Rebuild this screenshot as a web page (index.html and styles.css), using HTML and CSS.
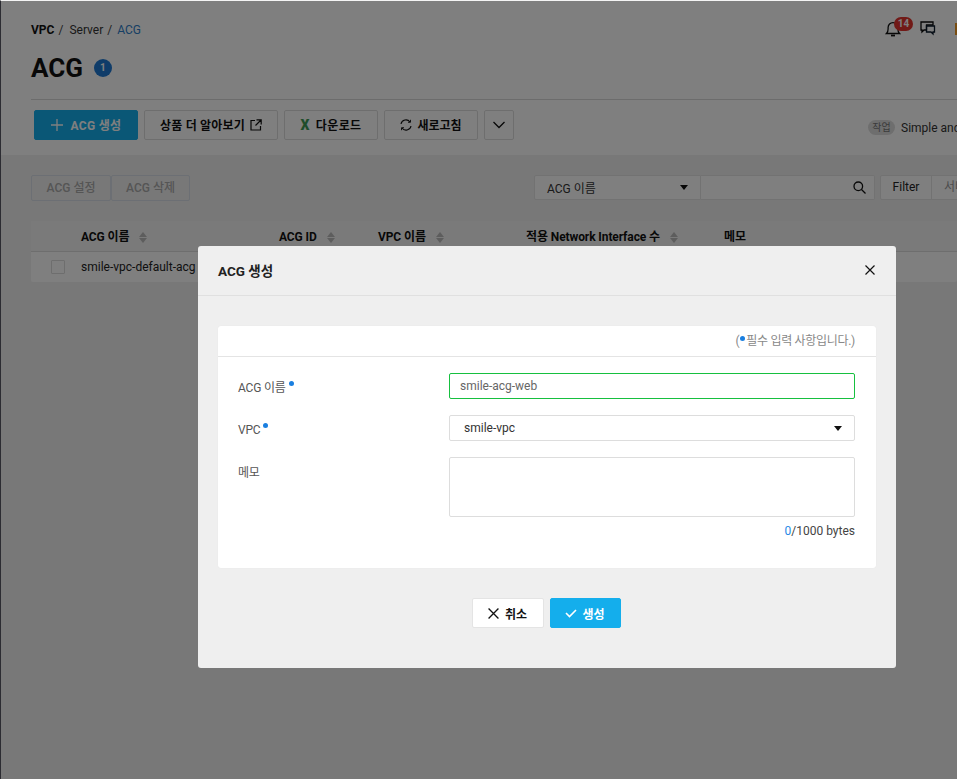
FILE: index.html
```html
<!DOCTYPE html>
<html lang="ko">
<head>
<meta charset="utf-8">
<title>ACG</title>
<link rel="stylesheet" href="styles.css">
</head>
<body>
<div class="page">
  <header class="top">
    <div class="crumb-row">
      <nav class="crumbs"><b>VPC</b><span class="sep">/</span><span>Server</span><span class="sep">/</span><span class="cur">ACG</span></nav>
      <div class="top-icons">
        <span class="bell">
          <svg width="16" height="18" viewBox="0 0 16 18" fill="none" stroke="#111" stroke-width="1.3"><path d="M1.5 13.5c1.3-1.2 1.6-2.4 1.6-4.5V7.5a4.9 4.9 0 0 1 9.8 0V9c0 2.100.3 3.300 1.600 4.500z"/><path d="M6 15.500h4" stroke-width="1.800"/></svg>
          <span class="bell-badge">14</span>
        </span>
        <svg class="chat" width="16" height="15" viewBox="0 0 16 15" fill="none" stroke="#0a0a0a" stroke-width="1.300"><path d="M1 1h12v3H6.500v5H4l-2 2V9H1z"/><path d="M6.500 5h8v6h-1.500v2l-2-2h-4.500z" stroke="#0b1a2a"/></svg>
        <span class="orange"></span>
      </div>
    </div>
    <div class="title-row"><h1>ACG</h1><span class="count">1</span></div>
    <div class="actions">
      <button class="btn primary"><svg width="12" height="12" viewBox="0 0 12 12" stroke="#fff" stroke-width="1.300"><path d="M6 0v12M0 6h12"/></svg><span>ACG 생성</span></button>
      <button class="btn learn"><span>상품 더 알아보기</span><svg width="12" height="12" viewBox="0 0 12 12" fill="none" stroke="#111" stroke-width="1.200"><path d="M5 1.500H1v9.500h9.500V7M6.500.8h4.700v4.700M11 1 5.500 6.500"/></svg></button>
      <button class="btn down dl"><b class="xl">X</b><span>다운로드</span></button>
      <button class="btn down"><svg width="12" height="12" viewBox="0 0 12 12" fill="none" stroke="#111" stroke-width="1.100"><path d="M1 5a5 5 0 0 1 9-2M11 7a5 5 0 0 1-9 2"/><path d="M10.500.8V3.300H8M1.500 11.200V8.700H4" stroke-width=".9"/></svg><span>새로고침</span></button>
      <button class="btn more"><svg width="14" height="8" viewBox="0 0 14 8" fill="none" stroke="#111" stroke-width="1.300"><path d="M1.500 1 7 6.500 12.500 1"/></svg></button>
      <div class="job"><span class="pill">작업</span><span class="job-text">Simple and Easy</span></div>
    </div>
  </header>

  <main class="content">
    <div class="tools">
      <div class="ghost-group"><button class="ghost first">ACG 설정</button><button class="ghost">ACG 삭제</button></div>
      <div class="search">
        <div class="s-select"><span>ACG 이름</span><i class="caret"></i></div>
        <div class="s-input"><svg width="13" height="13" viewBox="0 0 13 13" fill="none" stroke="#111" stroke-width="1.300"><circle cx="5.300" cy="5.300" r="4.300"/><path d="m8.500 8.500 4 4"/></svg></div>
        <div class="filter"><span class="f-on">Filter</span><span class="f-off">서버 이름</span></div>
      </div>
    </div>
    <div class="table">
      <div class="row head">
        <span class="c0"></span>
        <span class="c1">ACG 이름<i class="sort"></i></span>
        <span class="c2">ACG ID<i class="sort"></i></span>
        <span class="c3">VPC 이름<i class="sort"></i></span>
        <span class="c4">적용 Network Interface 수<i class="sort"></i></span>
        <span class="c5">메모</span>
      </div>
      <div class="row body-row">
        <span class="c0"><i class="check"></i></span>
        <span class="c1">smile-vpc-default-acg</span>
      </div>
    </div>
  </main>

  <div class="overlay"></div>

  <section class="modal">
    <div class="m-head">
      <h2>ACG 생성</h2>
      <svg width="10" height="10" viewBox="0 0 10 10" stroke="#111" stroke-width="1.200"><path d="m.5.500 9 9M9.500.500l-9 9"/></svg>
    </div>
    <div class="m-body">
      <div class="card">
        <div class="req-note">(<i class="dot"></i>필수 입력 사항입니다.)</div>
        <div class="form">
          <div class="f-row r1">
            <label>ACG 이름<i class="dot up"></i></label>
            <input class="text ok" type="text" value="smile-acg-web">
          </div>
          <div class="f-row r2">
            <label>VPC<i class="dot up"></i></label>
            <div class="text sel"><span>smile-vpc</span><i class="caret"></i></div>
          </div>
          <div class="f-row r3">
            <label>메모</label>
            <div class="memo-col">
              <div class="memo"></div>
              <div class="counter"><span class="zero">0</span>/1000 bytes</div>
            </div>
          </div>
        </div>
      </div>
      <div class="m-actions">
        <button class="m-btn cancel"><svg width="11" height="11" viewBox="0 0 10 10" stroke="#111" stroke-width="1.200"><path d="m.5.500 9 9M9.500.500l-9 9"/></svg><span>취소</span></button>
        <button class="m-btn ok-btn"><svg width="12" height="9" viewBox="0 0 12 9" fill="none" stroke="#fff" stroke-width="1.600"><path d="m1 4 3.500 3.500L11 1"/></svg><span>생성</span></button>
      </div>
    </div>
  </section>
</div>
</body>
</html>
```
FILE: styles.css
```css
* { box-sizing: border-box; }
html, body { margin: 0; height: 100%; overflow: hidden; }
body { font-family: Roboto, "Noto Sans CJK KR", sans-serif; font-size: 12px; color: #222; background: #fff; }
button { font-family: inherit; cursor: pointer; }

.page { position: relative; width: 957px; height: 779px; overflow: hidden; border-top: 1px solid #f4f4f4; border-left: 1px solid #2c2c32; background: #f1f1f1; }
.overlay { position: absolute; inset: 0; background: rgba(0, 0, 0, .5); }

.top { height: 154px; background: #fff; padding: 0 0 0 30px; }
.crumb-row { display: flex; justify-content: space-between; height: 44px; padding-top: 22px; line-height: 15px; }
.crumbs { color: #333; white-space: nowrap; }
.crumbs b { color: #111; font-weight: 700; }
.sep { margin: 0 6px 0 4px; color: #444; }
.cur { margin-left: -1px; color: #2f7fc9; }
.top-icons { display: flex; align-items: flex-start; width: 72px; flex: none; margin-top: -2px; }
.bell { position: relative; display: block; width: 16px; height: 18px; margin-top: -1px; }
.bell-badge { position: absolute; left: 9px; top: -3px; width: 19px; height: 14px; border-radius: 7px; background: #e3342f; color: #fff; font-size: 10px; font-weight: 700; line-height: 14px; text-align: center; }
.chat { margin-left: 19px; flex: none; }
.orange { width: 3px; height: 12px; margin-left: 19px; margin-top: 2px; background: #f09a25; flex: none; }

.title-row { display: flex; align-items: center; height: 46px; }
h1 { margin: 0; font-size: 26px; line-height: 46px; font-weight: 700; color: #111; }
.count { width: 18px; height: 18px; margin-left: 11px; border-radius: 50%; background: #1e78d2; color: #fff; font-size: 10px; font-weight: 700; line-height: 18px; text-align: center; }

.actions { position: relative; display: flex; gap: 6px; height: 41px; margin-top: 8px; border-top: 1px solid #d8d8d8; padding: 10px 0 0 3px; }
.btn { display: flex; align-items: center; justify-content: center; height: 30px; padding: 0; background: #fff; border: 1px solid #ddd; border-radius: 2px; font-size: 12px; font-weight: 700; color: #111; white-space: nowrap; }
.btn span { padding-bottom: 1px; }
.primary { width: 104px; gap: 8px; background: #14aeec; border-color: #14aeec; color: #fff; letter-spacing: .3px; }
.learn { width: 134px; gap: 5px; letter-spacing: .2px; }
.down { width: 94px; gap: 5px; }
.dl { gap: 6px; letter-spacing: .4px; }
.more { width: 30px; }
.xl { color: #3f9a55; font-size: 14px; }
.job { position: absolute; left: 837px; top: 20px; display: flex; align-items: center; white-space: nowrap; }
.pill { width: 27px; height: 15px; border-radius: 8px; background: #ddd; color: #777; font-size: 10px; line-height: 15px; text-align: center; }
.job-text { margin-left: 6px; color: #333; font-size: 12px; }

.content { padding: 20px 0 0 30px; }
.tools { display: flex; height: 26px; }
.ghost-group { display: flex; width: 503px; flex: none; }
.ghost { width: 80px; height: 26px; background: transparent; border: 1px solid #d8dfe8; border-radius: 2px; color: #aaa; font-size: 12px; font-weight: 500; padding: 0 0 3px; }
.ghost + .ghost { width: 79px; }
.search { display: flex; height: 25px; flex: none; }
.s-select { display: flex; align-items: center; justify-content: space-between; width: 167px; padding: 0 12px 1px 12px; background: #fff; border: 1px solid #e4e4e4; border-radius: 2px 0 0 2px; color: #333; }
.caret { display: block; width: 0; height: 0; border-left: 4px solid transparent; border-right: 4px solid transparent; border-top: 5px solid #111; }
.s-input { display: flex; align-items: center; justify-content: flex-end; width: 174px; padding-right: 8px; background: #fff; border: 1px solid #e4e4e4; border-left: 0; border-radius: 0 2px 2px 0; }
.filter { display: flex; margin-left: 5px; background: #fff; border: 1px solid #e4e4e4; border-radius: 2px; line-height: 23px; white-space: nowrap; }
.f-on { width: 51px; text-align: center; color: #222; border-right: 1px solid #e4e4e4; }
.f-off { padding-left: 12px; width: 80px; color: #999; }

.table { margin-top: 20px; background: #fff; border-radius: 2px; }
.row { display: flex; white-space: nowrap; }
.head { align-items: baseline; height: 31px; padding-top: 6px; background: #f5f5f5; border-bottom: 1px solid #ddd; font-weight: 700; color: #111; letter-spacing: -.1px; }
.body-row { align-items: center; height: 30px; color: #222; font-size: 12px; }
.c0 { width: 50px; flex: none; padding-left: 20px; }
.c1 { width: 198px; flex: none; }
.c2 { width: 99px; flex: none; }
.c3 { width: 148px; flex: none; }
.c4 { width: 198px; flex: none; }
.sort { display: inline-block; position: relative; width: 8px; height: 11px; margin-left: 10px; vertical-align: -2px; }
.sort::before, .sort::after { content: ""; position: absolute; left: 0; border-left: 4px solid transparent; border-right: 4px solid transparent; }
.sort::before { top: 0; border-bottom: 5px solid #bbb; }
.sort::after { bottom: 0; border-top: 5px solid #bbb; }
.check { display: block; width: 14px; height: 14px; border: 1px solid #ddd; background: #fff; border-radius: 1px; }

.modal { position: absolute; left: 197px; top: 245px; width: 698px; height: 422px; background: #efefef; border-radius: 3px; }
.m-head { display: flex; align-items: center; justify-content: space-between; height: 50px; padding: 0 21px 2px 20px; border-bottom: 1px solid #e0e0e0; }
h2 { margin: 0; font-size: 13.500px; font-weight: 700; color: #222; }
.m-body { padding: 30px 20px 0; }
.card { height: 242px; background: #fff; border-radius: 3px; box-shadow: 0 0 1px #e0e0e0; }
.req-note { height: 31px; padding-right: 21px; border-bottom: 1px solid #e4e4e4; text-align: right; color: #888; line-height: 30px; letter-spacing: -.3px; }
.dot { display: inline-block; width: 5px; height: 5px; margin: 0 1px; border-radius: 50%; background: #1a7fe0; vertical-align: 4px; }
.dot.up { margin-left: 3px; vertical-align: 6px; }
.form { padding: 16px 21px 0 20px; }
.f-row { display: flex; }
.f-row label { width: 211px; flex: none; padding-top: 2px; color: #555; line-height: 27px; letter-spacing: -.2px; }
.r1 { height: 26px; }
.r2 { height: 26px; margin-top: 16px; }
.r3 { margin-top: 16px; }
.r3 label { padding-top: 3px; }
.text { display: block; width: 406px; height: 26px; border: 1px solid #ddd; border-radius: 2px; background: #fff; font: inherit; }
.ok { border-color: #16c03f; padding: 0 10px; color: #666; outline: none; }
.sel { display: flex; align-items: center; justify-content: space-between; padding: 0 12px 0 14px; color: #333; }
.memo-col { width: 406px; }
.memo { height: 60px; border: 1px solid #ddd; border-radius: 2px; background: #fff; }
.counter { margin-top: 7px; text-align: right; color: #444; line-height: 14px; }
.zero { color: #2a8ae6; }

.m-actions { display: flex; justify-content: center; gap: 6px; margin-top: 30px; padding-right: 2px; }
.m-btn { display: flex; align-items: center; justify-content: center; gap: 6px; height: 30px; padding: 0; border-radius: 2px; font-size: 12px; font-weight: 700; }
.cancel { width: 72px; background: #fff; border: 1px solid #e4e4e4; color: #111; }
.ok-btn { width: 71px; gap: 5px; background: #14aeec; border: 1px solid #14aeec; color: #fff; }
```
